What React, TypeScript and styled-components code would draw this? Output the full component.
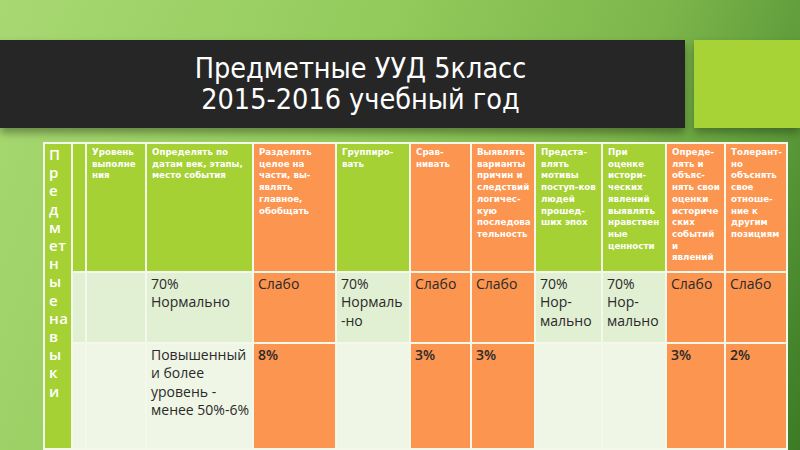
import styled, { createGlobalStyle } from 'styled-components';

const GlobalStyle = createGlobalStyle`
  html, body {
    margin: 0;
    padding: 0;
  }
  body {
    width: 800px;
    height: 450px;
    overflow: hidden;
    font-family: "Open Sans", "DejaVu Sans", sans-serif;
  }
`;

const Slide = styled.main`
  width: 800px;
  height: 450px;
  overflow: hidden;
  display: flex;
  flex-direction: column;
  background: linear-gradient(112deg, #a8d872 0%, #93cb5c 40%, #7db64b 68%, #5a9838 86%, #3c7a25 100%);
`;

const TitleRow = styled.header`
  margin-top: 40px;
  display: flex;
  height: 89px;
`;

const TitleBar = styled.div`
  width: 685px;
  background: #262626;
  box-shadow: 0 5px 8px rgba(0, 0, 0, 0.35);
  display: flex;
  flex-direction: column;
  align-items: center;
  justify-content: center;
  padding-left: 36px;
  box-sizing: border-box;

  h1 {
    margin: 0;
    font-family: "DejaVu Sans Condensed", "DejaVu Sans", sans-serif;
    font-weight: 400;
    font-size: 28.5px;
    line-height: 31px;
    color: #ffffff;
    text-align: center;
  }
`;

const Accent = styled.div`
  flex: 1;
  margin-left: 9px;
  background: #a8d337;
  box-shadow: 0 5px 8px rgba(0, 0, 0, 0.3);
`;

const Grid = styled.section`
  margin: 14px 0 0 43px;
  display: grid;
  grid-template-columns: 26px 12px 58px 105px 81px 72px 59px 62px 65px 62px 57px 60px;
  grid-template-rows: 127px 69px 104px;
  gap: 2px;
  padding: 2px;
  width: max-content;
  background: #f3f8ea;
`;

const colors = {
  lime: '#a6d134',
  orange: '#fc9550',
  pale: '#e1efd3',
  paler: '#eff6e6',
};

type Tone = keyof typeof colors;

const SideCell = styled.div`
  grid-row: 1 / 4;
  background: ${colors.lime};
  padding: 1px 0 0 4px;
  color: #ffffff;
  font-family: "Open Sans", "DejaVu Sans", sans-serif;
  font-weight: 600;
  font-size: 15px;
  line-height: 18.2px;
  letter-spacing: 0.5px;
`;

const HeadCell = styled.div<{ $tone: Tone }>`
  background: ${({ $tone }) => colors[$tone]};
  padding: 3px 0 0 5px;
  color: #ffffff;
  font-family: "DejaVu Sans", sans-serif;
  font-weight: 700;
  font-size: 8.7px;
  line-height: 11.7px;
  white-space: nowrap;
  overflow: hidden;
`;

const BodyCell = styled.div<{ $tone: Tone; $bold?: boolean }>`
  background: ${({ $tone }) => colors[$tone]};
  padding: 2px 0 0 4px;
  color: #2a2a2a;
  font-family: "Open Sans", "DejaVu Sans", sans-serif;
  font-weight: ${({ $bold }) => ($bold ? 600 : 400)};
  font-size: 14px;
  line-height: 18.3px;
  white-space: nowrap;
  overflow: hidden;
`;

const Line = styled.span`
  display: block;
`;

const side = ['П', 'р', 'е', 'д', 'м', 'ет', 'н', 'ы', 'е', 'на', 'в', 'ы', 'к', 'и'];

const headers: { tone: Tone; lines: string[] }[] = [
  { tone: 'lime', lines: [] },
  { tone: 'lime', lines: ['Уровень', 'выполне', 'ния'] },
  { tone: 'lime', lines: ['Определять по', 'датам век, этапы,', 'место события'] },
  { tone: 'orange', lines: ['Разделять', 'целое на', 'части, вы-', 'являть', 'главное,', 'обобщать'] },
  { tone: 'lime', lines: ['Группиро-', 'вать'] },
  { tone: 'orange', lines: ['Срав-', 'нивать'] },
  { tone: 'orange', lines: ['Выявлять', 'варианты', 'причин и', 'следствий', 'логичес-', 'кую', 'последова', 'тельность'] },
  { tone: 'lime', lines: ['Предста-', 'влять', 'мотивы', 'поступ-ков', 'людей', 'прошед-', 'ших эпох'] },
  { tone: 'lime', lines: ['При', 'оценке', 'истори-', 'ческих', 'явлений', 'выявлять', 'нравствен', 'ные', 'ценности'] },
  { tone: 'orange', lines: ['Опреде-', 'лять и', 'объяс-', 'нять свои', 'оценки', 'историче', 'ских', 'событий', 'и', 'явлений'] },
  { tone: 'orange', lines: ['Толерант-', 'но', 'объснять', 'свое', 'отноше-', 'ние к', 'другим', 'позициям'] },
];

const middle: { tone: Tone; lines: string[] }[] = [
  { tone: 'pale', lines: [] },
  { tone: 'pale', lines: [] },
  { tone: 'pale', lines: ['70%', 'Нормально'] },
  { tone: 'orange', lines: ['Слабо'] },
  { tone: 'pale', lines: ['70%', 'Нормаль', '-но'] },
  { tone: 'orange', lines: ['Слабо'] },
  { tone: 'orange', lines: ['Слабо'] },
  { tone: 'pale', lines: ['70%', 'Нор-', 'мально'] },
  { tone: 'pale', lines: ['70%', 'Нор-', 'мально'] },
  { tone: 'orange', lines: ['Слабо'] },
  { tone: 'orange', lines: ['Слабо'] },
];

const lower: { tone: Tone; lines: string[] }[] = [
  { tone: 'paler', lines: [] },
  { tone: 'paler', lines: [] },
  { tone: 'paler', lines: ['Повышенный', 'и более', 'уровень -', 'менее 50%-6%'] },
  { tone: 'orange', lines: ['8%'] },
  { tone: 'paler', lines: [] },
  { tone: 'orange', lines: ['3%'] },
  { tone: 'orange', lines: ['3%'] },
  { tone: 'paler', lines: [] },
  { tone: 'paler', lines: [] },
  { tone: 'orange', lines: ['3%'] },
  { tone: 'orange', lines: ['2%'] },
];

function App() {
  return (
    <>
      <GlobalStyle />
      <Slide>
        <TitleRow>
          <TitleBar>
            <h1>
              Предметные УУД 5класс
              <br />
              2015-2016 учебный год
            </h1>
          </TitleBar>
          <Accent />
        </TitleRow>
        <Grid>
          <SideCell>
            {side.map((s, i) => (
              <Line key={i}>{s}</Line>
            ))}
          </SideCell>
          {headers.map((h, i) => (
            <HeadCell key={`h${i}`} $tone={h.tone}>
              {h.lines.map((l, j) => (
                <Line key={j}>{l}</Line>
              ))}
            </HeadCell>
          ))}
          {middle.map((c, i) => (
            <BodyCell key={`m${i}`} $tone={c.tone}>
              {c.lines.map((l, j) => (
                <Line key={j}>{l}</Line>
              ))}
            </BodyCell>
          ))}
          {lower.map((c, i) => (
            <BodyCell key={`l${i}`} $tone={c.tone} $bold={c.tone === 'orange'}>
              {c.lines.map((l, j) => (
                <Line key={j}>{l}</Line>
              ))}
            </BodyCell>
          ))}
        </Grid>
      </Slide>
    </>
  );
}

export default App;
